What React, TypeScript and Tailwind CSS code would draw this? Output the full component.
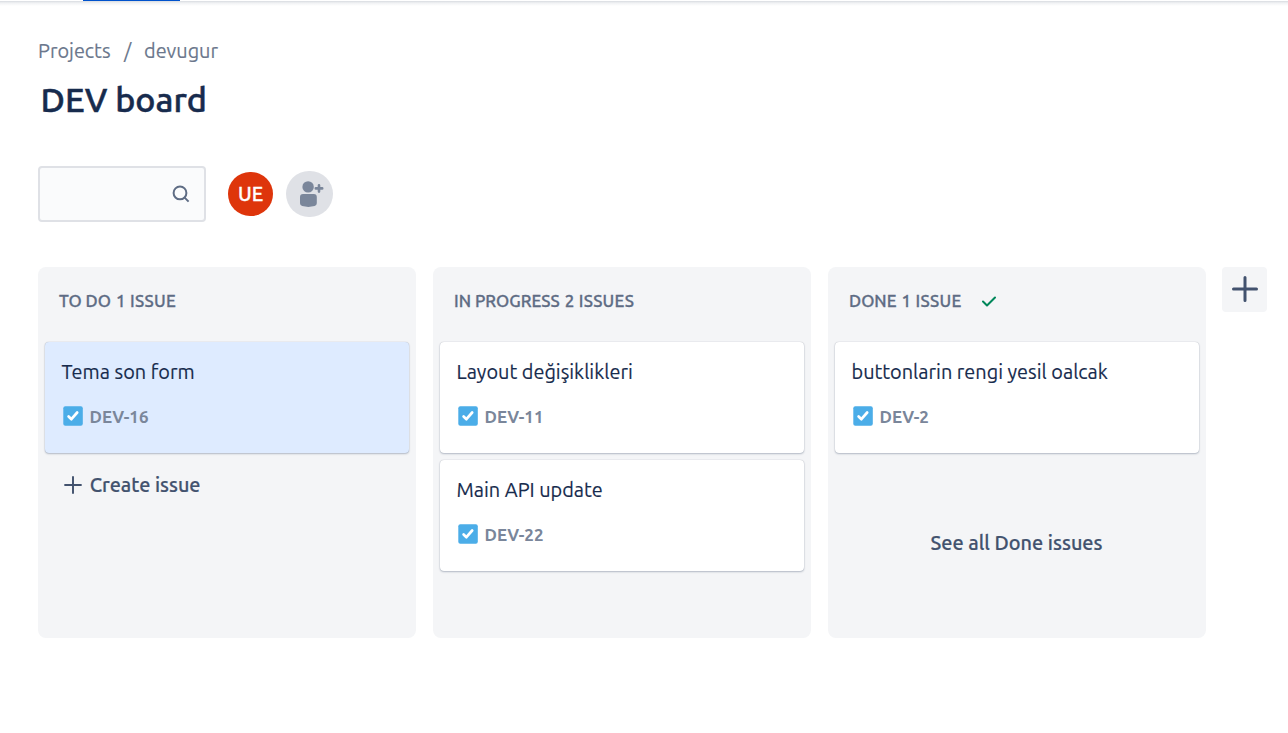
import type { ReactNode } from "react";

type Issue = { title: string; id: string; selected?: boolean };

function TaskIcon() {
  return (
    <svg className="h-5 w-5 shrink-0" viewBox="0 0 20 20">
      <rect x="0.3" y="0.2" width="19.5" height="19.6" rx="2" fill="#4bade8" />
      <path d="M5.6 10.5 8.4 13.2 14.2 6.5" fill="none" stroke="#fff" strokeWidth="2.7" strokeLinecap="round" strokeLinejoin="round" />
    </svg>
  );
}

function PlusIcon({ className, weight }: { className: string; weight: number }) {
  return (
    <svg className={className} viewBox="0 0 26 26" fill="none" stroke="#42526e" strokeWidth={weight} strokeLinecap="round">
      <path d="M13 1.5V24.5M1.5 13H24.5" />
    </svg>
  );
}

function Card({ issue }: { issue: Issue }) {
  return (
    <article
      className={`h-[111px] rounded-[4px] pt-[16px] pl-[16.5px] shadow-[0_1px_2px_rgba(9,30,66,0.25),0_0_1px_rgba(9,30,66,0.31)] ${
        issue.selected ? "bg-[#deebff]" : "bg-white"
      }`}
    >
      <h3 className="h-7 whitespace-nowrap text-[19.9px] leading-7 text-[#172b4d] [-webkit-text-stroke:0.15px]">{issue.title}</h3>
      <div className="mt-[20px] ml-[1.5px] flex h-5 items-center gap-[6.6px]">
        <TaskIcon />
        <span className="pt-px text-[17px] leading-5 font-bold text-[#7a869a]">{issue.id}</span>
      </div>
    </article>
  );
}

function Column({ title, count, issues, mark, children }: { title: string; count: string; issues: Issue[]; mark?: ReactNode; children?: ReactNode }) {
  return (
    <section className="flex h-[371px] w-[378px] shrink-0 flex-col rounded-[8px] bg-[#f4f5f7] px-[7px]">
      <header className="flex h-[75px] items-center pb-[7px] pl-[14px]">
        <h2 className="flex gap-[5px] whitespace-nowrap text-[16.94px] leading-5 font-medium text-[#5e6c84] [-webkit-text-stroke:0.3px]">
          <span>{title}</span>
          <span className="tracking-[0.28px]">{count}</span>
        </h2>
        {mark}
      </header>
      <div className="flex flex-col gap-[7px]">
        {issues.map((issue) => (
          <Card key={issue.id} issue={issue} />
        ))}
      </div>
      {children}
    </section>
  );
}

export default function App() {
  return (
    <main className="h-[733px] w-[1288px] overflow-hidden bg-white font-['Ubuntu','Noto_Sans',sans-serif]">
      <div className="h-px bg-white">
        <div className="ml-[83px] h-px w-[97px] bg-[#0052cc]" />
      </div>
      <div className="h-[5px] bg-linear-to-b from-[#d8dbe0] via-[#f1f2f4] via-40% to-white" />
      <div className="pl-[38px]">
        <nav className="mt-[31px] flex h-7 text-[19.9px] leading-7 text-[#6b778c] [-webkit-text-stroke:0.15px]">
          <span className="w-[86px]">Projects</span>
          <span className="w-[20px]">/</span>
          <span>devugur</span>
        </nav>
        <h1 className="mt-[14px] ml-[2.5px] h-10 text-[34.1px] leading-10 font-medium text-[#172b4d] [-webkit-text-stroke:0.5px]">DEV board</h1>
        <div className="mt-[47px] flex h-14 items-center">
          <div className="flex h-14 w-[168px] items-center justify-end rounded-[4px] border-2 border-[#dfe1e6] bg-[#fafbfc] pr-[14px]">
            <svg className="h-[18px] w-[18px]" viewBox="0 0 18 18" fill="none" stroke="#5e6c84" strokeWidth="2">
              <circle cx="8" cy="7.9" r="6.4" />
              <path d="m12.4 12.4 4.2 4.2" />
            </svg>
          </div>
          <div className="mb-px ml-[22px] flex h-[44px] w-[45px] items-center justify-center rounded-full bg-[#de350b] text-[19.9px] font-medium text-white [-webkit-text-stroke:0.3px]">UE</div>
          <div className="mb-px ml-[13px] flex h-[46px] w-[47px] items-center justify-center rounded-full bg-[#dfe1e6]">
            <svg className="h-[46px] w-[47px]" viewBox="0 0 47 46" fill="#7a869a">
              <circle cx="22.1" cy="15.9" r="5.7" />
              <path d="M14 26q0-3 3-3h10.800q3 0 3 3v6.200q0 2.200-2.200 2.900-6.200 1.600-12.400 0-2.200-.7-2.200-2.900z" />
              <path d="M33 14.200v6.400M29.800 17.400h6.400" stroke="#7a869a" strokeWidth="2.600" strokeLinecap="round" />
            </svg>
          </div>
        </div>
        <div className="mt-[45px] flex items-start">
          <div className="flex gap-[17px]">
            <Column title="TO DO" count="1 ISSUE" issues={[{ title: "Tema son form", id: "DEV-16", selected: true }]}>
              <button className="mt-[18px] ml-[19px] flex h-7 items-center gap-[7.7px] text-[19.8px] leading-7 font-medium text-[#42526e] [-webkit-text-stroke:0.2px]">
                <PlusIcon className="h-[18px] w-[18px]" weight={2.8} />
                Create issue
              </button>
            </Column>
            <Column
              title="IN PROGRESS"
              count="2 ISSUES"
              issues={[
                { title: "Layout değişiklikleri", id: "DEV-11" },
                { title: "Main API update", id: "DEV-22" },
              ]}
            />
            <Column
              title="DONE"
              count="1 ISSUE"
              mark={
                <svg className="ml-[20px] h-[12px] w-[15px]" viewBox="0 0 15 12" fill="none" stroke="#00875a" strokeWidth="2" strokeLinecap="round" strokeLinejoin="round">
                  <path d="m2 6.500 4 4 8-8" />
                </svg>
              }
              issues={[{ title: "buttonlarin rengi yesil oalcak", id: "DEV-2" }]}
            >
              <button className="mt-[76px] h-7 whitespace-nowrap pr-px text-center text-[19.9px] leading-7 font-medium text-[#42526e] [-webkit-text-stroke:0.2px]">See all Done issues</button>
            </Column>
          </div>
          <button className="ml-[16px] flex h-[45px] w-[45px] items-center justify-center rounded-[4px] bg-[#f4f5f7]">
            <PlusIcon className="mb-px h-[26px] w-[26px]" weight={3} />
          </button>
        </div>
      </div>
    </main>
  );
}
